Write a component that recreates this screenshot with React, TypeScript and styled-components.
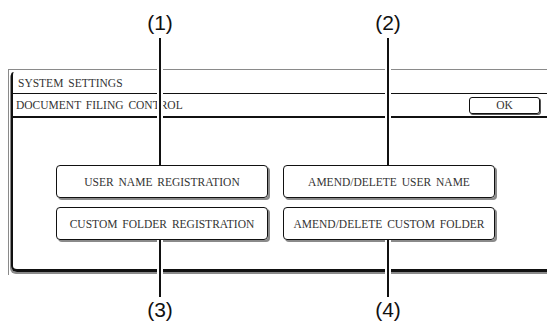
import * as React from 'react';
import styled, { createGlobalStyle } from 'styled-components';

const GlobalStyle = createGlobalStyle`
  html, body {
    margin: 0;
    padding: 0;
    background: #fff;
    overflow: hidden;
  }
`;

const Page = styled.div`
  position: relative;
  width: 547px;
  height: 327px;
  overflow: hidden;
  background: #fff;
`;

const LabelRow = styled.div<{ top: number }>`
  display: flex;
  gap: 188px;
  padding-left: 140px;
  height: ${p => p.top}px;
  align-items: flex-start;
`;

const Label = styled.div<{ offset: number }>`
  width: 40px;
  padding-top: ${p => p.offset}px;
  text-align: center;
  font-family: 'Liberation Sans', Arial, sans-serif;
  font-size: 21px;
  line-height: 22px;
  color: #111;
`;

const Screen = styled.div`
  margin-left: 8px;
  width: 560px;
  border-top: 1px solid #8a8a8a;
  border-left: 1px solid #8a8a8a;
  padding: 2px 0 3px 2px;
`;

const Frame = styled.div`
  border-left: 2px solid #111;
  border-bottom: 3px solid #111;
  border-top-left-radius: 3px;
  border-bottom-left-radius: 6px;
  box-shadow: -1px 2px 0 #8a8a8a;
`;

const Mono = styled.span`
  font-family: 'Liberation Serif', 'Times New Roman', serif;
  font-size: 11.5px;
  word-spacing: 2px;
  color: #333;
  white-space: nowrap;
`;

const TitleRow = styled.div`
  height: 21px;
  display: flex;
  align-items: center;
  padding-left: 5px;
  border-bottom: 1px solid #111;
`;

const HeaderRow = styled.div`
  height: 22px;
  display: flex;
  align-items: center;
  justify-content: space-between;
  padding: 0 31px 0 3px;
  border-bottom: 2px solid #111;
`;

const OkButton = styled.div`
  width: 69px;
  height: 15px;
  border: 1px solid #111;
  border-radius: 3px;
  box-shadow: 1px 1px 0 #555;
  display: flex;
  align-items: center;
  justify-content: center;
`;

const Body = styled.div`
  height: 151px;
  padding: 47px 0 0 43px;
  box-sizing: border-box;
  display: grid;
  grid-template-columns: 212px 212px;
  grid-auto-rows: 33px;
  column-gap: 15px;
  row-gap: 9px;
  align-content: start;
`;

const KeyButton = styled.div`
  box-sizing: border-box;
  border: 1.5px solid #111;
  border-radius: 4px;
  box-shadow: 2px 2px 0 #8a8a8a;
  display: flex;
  align-items: center;
  justify-content: center;
`;

const Leader = styled.div<{ x: number; from: number; to: number }>`
  position: absolute;
  left: ${p => p.x - 3}px;
  top: ${p => p.from}px;
  width: 6px;
  height: ${p => p.to - p.from}px;
  background: linear-gradient(to right, #fff 2px, #111 2px, #111 4px, #fff 4px);
`;

const keys = [
  'USER NAME REGISTRATION',
  'AMEND/DELETE USER NAME',
  'CUSTOM FOLDER REGISTRATION',
  'AMEND/DELETE CUSTOM FOLDER'
];

const App: React.FC = () => (
  <Page>
    <GlobalStyle />
    <LabelRow top={69}>
      <Label offset={12}>(1)</Label>
      <Label offset={12}>(2)</Label>
    </LabelRow>
    <Screen>
      <Frame>
        <TitleRow>
          <Mono>SYSTEM SETTINGS</Mono>
        </TitleRow>
        <HeaderRow>
          <Mono>DOCUMENT FILING CONTROL</Mono>
          <OkButton>
            <Mono>OK</Mono>
          </OkButton>
        </HeaderRow>
        <Body>
          {keys.map(k => (
            <KeyButton key={k}>
              <Mono>{k}</Mono>
            </KeyButton>
          ))}
        </Body>
      </Frame>
    </Screen>
    <LabelRow top={40}>
      <Label offset={24}>(3)</Label>
      <Label offset={24}>(4)</Label>
    </LabelRow>
    <Leader x={160} from={38} to={165} />
    <Leader x={388} from={38} to={165} />
    <Leader x={160} from={240} to={297} />
    <Leader x={388} from={240} to={297} />
  </Page>
);

export default App;
